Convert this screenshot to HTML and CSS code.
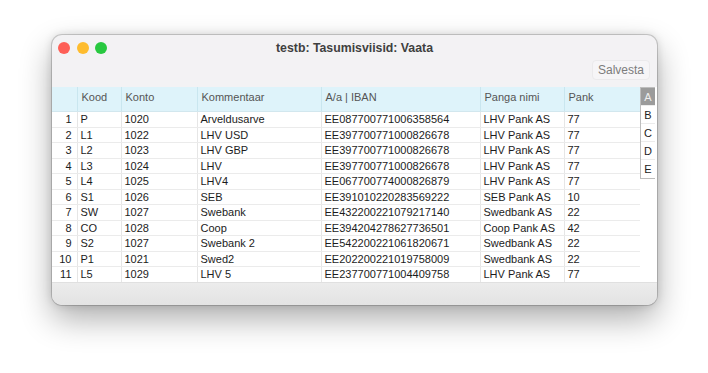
FILE: index.html
```html
<!DOCTYPE html>
<html lang="et">
<head>
    <meta charset="UTF-8">
    <title>testb: Tasumisviisid: Vaata</title>
    <link rel="stylesheet" href="styles.css">
</head>
<body>
    <div class="window">
        <div class="titlebar">
            <div class="lights">
                <span class="light red"></span>
                <span class="light yellow"></span>
                <span class="light green"></span>
            </div>
            <div class="title">testb: Tasumisviisid: Vaata</div>
            <div></div>
        </div>
        <div class="toolbar">
            <button class="save">Salvesta</button>
        </div>
        <div class="content">
            <table class="grid">
                <colgroup>
                    <col style="width:25px">
                    <col style="width:44px">
                    <col style="width:76px">
                    <col style="width:124px">
                    <col style="width:159px">
                    <col style="width:84px">
                    <col style="width:76px">
                </colgroup>
                <thead>
                    <tr>
                        <th></th>
                        <th>Kood</th>
                        <th>Konto</th>
                        <th>Kommentaar</th>
                        <th>A/a | IBAN</th>
                        <th>Panga nimi</th>
                        <th>Pank</th>
                    </tr>
                </thead>
                <tbody>
                    <tr><td class="num">1</td><td>P</td><td>1020</td><td>Arveldusarve</td><td>EE087700771006358564</td><td>LHV Pank AS</td><td>77</td></tr>
                    <tr><td class="num">2</td><td>L1</td><td>1022</td><td>LHV USD</td><td>EE397700771000826678</td><td>LHV Pank AS</td><td>77</td></tr>
                    <tr><td class="num">3</td><td>L2</td><td>1023</td><td>LHV GBP</td><td>EE397700771000826678</td><td>LHV Pank AS</td><td>77</td></tr>
                    <tr><td class="num">4</td><td>L3</td><td>1024</td><td>LHV</td><td>EE397700771000826678</td><td>LHV Pank AS</td><td>77</td></tr>
                    <tr><td class="num">5</td><td>L4</td><td>1025</td><td>LHV4</td><td>EE067700774000826879</td><td>LHV Pank AS</td><td>77</td></tr>
                    <tr><td class="num">6</td><td>S1</td><td>1026</td><td>SEB</td><td>EE391010220283569222</td><td>SEB Pank AS</td><td>10</td></tr>
                    <tr><td class="num">7</td><td>SW</td><td>1027</td><td>Swebank</td><td>EE432200221079217140</td><td>Swedbank AS</td><td>22</td></tr>
                    <tr><td class="num">8</td><td>CO</td><td>1028</td><td>Coop</td><td>EE394204278627736501</td><td>Coop Pank AS</td><td>42</td></tr>
                    <tr><td class="num">9</td><td>S2</td><td>1027</td><td>Swebank 2</td><td>EE542200221061820671</td><td>Swedbank AS</td><td>22</td></tr>
                    <tr><td class="num">10</td><td>P1</td><td>1021</td><td>Swed2</td><td>EE202200221019758009</td><td>Swedbank AS</td><td>22</td></tr>
                    <tr><td class="num">11</td><td>L5</td><td>1029</td><td>LHV 5</td><td>EE237700771004409758</td><td>LHV Pank AS</td><td>77</td></tr>
                </tbody>
            </table>
            <div class="index">
                <div class="letter active">A</div>
                <div class="letter">B</div>
                <div class="letter">C</div>
                <div class="letter">D</div>
                <div class="letter">E</div>
            </div>
        </div>
        <div class="footer"></div>
    </div>
</body>
</html>
```

FILE: styles.css
```css
html, body {
    height: 100%;
}

body {
    margin: 0;
    padding: 35px 0 0 52px;
    box-sizing: border-box;
    background-color: #fff;
    font-family: 'Liberation Sans', Arial, sans-serif;
}

.window {
    width: 605px;
    height: 270px;
    display: flex;
    flex-direction: column;
    background-color: #f3f2f4;
    border-radius: 10px;
    overflow: hidden;
    box-shadow: 0 0 0 1px rgba(0, 0, 0, 0.16), 0 14px 32px rgba(0, 0, 0, 0.32), 0 0 10px rgba(0, 0, 0, 0.14);
}

.titlebar {
    height: 25px;
    flex-shrink: 0;
    display: grid;
    grid-template-columns: 1fr auto 1fr;
    align-items: center;
}

.lights {
    display: flex;
    gap: 6.5px;
    padding-left: 6px;
}

.light {
    width: 12px;
    height: 12px;
    border-radius: 50%;
}

.red { background-color: #fe5f57; }
.yellow { background-color: #febc2e; }
.green { background-color: #28c840; }

.title {
    font-size: 12.3px;
    font-weight: bold;
    color: #3f3f3f;
}

.toolbar {
    height: 27px;
    flex-shrink: 0;
    display: flex;
    justify-content: flex-end;
    align-items: flex-start;
    padding-right: 7px;
}

.save {
    height: 20px;
    padding: 0 5px;
    font-family: inherit;
    font-size: 12px;
    color: #7c7c7c;
    background-color: #f6f5f7;
    border: 1px solid #ebeaec;
    border-radius: 4px;
}

.content {
    flex: 1;
    min-height: 0;
    display: flex;
    align-items: flex-start;
    background-color: #fff;
}

.grid {
    width: 588px;
    table-layout: fixed;
    border-collapse: collapse;
    font-size: 11px;
    color: #1c1c1c;
}

.grid th {
    padding: 4px 4px 7px;
    line-height: 13px;
    text-align: left;
    font-weight: normal;
    color: #555;
    background-color: #def3fa;
    border-left: 1px solid #c9e6ef;
    border-bottom: 1px solid #d2e7ee;
}

.grid th:first-child {
    border-left: none;
}

.grid td {
    padding: 0 3px;
    line-height: 14.5px;
    white-space: nowrap;
    border-left: 1px solid #e6e6e6;
    border-bottom: 1px solid #ebebeb;
}

.grid td:first-child {
    border-left: none;
}

.grid td.num {
    text-align: right;
    padding-right: 5px;
}

.index {
    width: 14px;
    border: 1px solid #bdbdbd;
    border-right: none;
    background-color: #fff;
}

.letter {
    height: 18px;
    line-height: 18px;
    text-align: center;
    font-size: 11px;
    color: #222;
    border-bottom: 1px solid #ececec;
    box-sizing: border-box;
}

.letter:last-child {
    border-bottom: none;
}

.letter.active {
    background-color: #9b9b9b;
    color: #eee;
}

.footer {
    height: 22px;
    flex-shrink: 0;
    background: linear-gradient(#ececec, #e3e3e3);
    border-top: 1px solid #e0e0e0;
}
```
